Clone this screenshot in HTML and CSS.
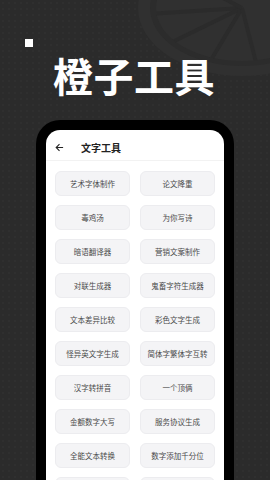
FILE: index.html
```html
<!DOCTYPE html>
<html lang="zh-CN">
  <head>
    <meta charset="UTF-8" />
    <meta name="viewport" content="width=device-width, initial-scale=1.0" />
    <title>橙子工具</title>
    <link rel="stylesheet" href="styles.css">
  </head>
  <body>
    <svg class="slice" viewBox="0 0 140 90" width="140" height="90">
      <defs>
        <clipPath id="pulp">
          <ellipse cx="112" cy="8" rx="86" ry="53" />
        </clipPath>
      </defs>
      <ellipse cx="112" cy="8" rx="104" ry="68" fill="#303030" />
      <ellipse cx="112" cy="8" rx="92" ry="58" fill="#2c2c2c" />
      <ellipse cx="112" cy="8" rx="86" ry="53" fill="#303030" />
      <g stroke="#2b2b2b" stroke-width="4" clip-path="url(#pulp)">
        <line x1="112" y1="8" x2="20" y2="14" />
        <line x1="112" y1="8" x2="30" y2="48" />
        <line x1="112" y1="8" x2="75" y2="70" />
        <line x1="112" y1="8" x2="128" y2="70" />
        <line x1="112" y1="8" x2="40" y2="-30" />
      </g>
    </svg>

    <div class="hero">
      <span class="dot"></span>
      <h1>橙子工具</h1>
    </div>

    <div class="phone">
      <div class="screen">
        <div class="topbar">
          <svg class="back" viewBox="0 0 10 10" width="9" height="9">
            <path d="M9 5H1.5M5 1.3L1.3 5 5 8.7" fill="none" stroke="#222" stroke-width="1.2" />
          </svg>
          <span class="topbar-title">文字工具</span>
        </div>
        <div class="tools">
          <div class="tool">艺术字体制作</div>
          <div class="tool">论文降重</div>
          <div class="tool">毒鸡汤</div>
          <div class="tool">为你写诗</div>
          <div class="tool">暗语翻译器</div>
          <div class="tool">营销文案制作</div>
          <div class="tool">对联生成器</div>
          <div class="tool">鬼畜字符生成器</div>
          <div class="tool">文本差异比较</div>
          <div class="tool">彩色文字生成</div>
          <div class="tool">怪异英文字生成</div>
          <div class="tool">简体字繁体字互转</div>
          <div class="tool">汉字转拼音</div>
          <div class="tool">一个顶俩</div>
          <div class="tool">金额数字大写</div>
          <div class="tool">服务协议生成</div>
          <div class="tool">全能文本转换</div>
          <div class="tool">数字添加千分位</div>
          <div class="tool"></div>
          <div class="tool"></div>
        </div>
      </div>
    </div>
  </body>
</html>
```

FILE: styles.css
```css
body {
  margin: 0;
  width: 270px;
  height: 480px;
  overflow: hidden;
  position: relative;
  background-color: #2b2b2b;
  background-image: radial-gradient(circle, #2f2f2f 1px, transparent 1.3px);
  background-size: 6px 6px;
  font-family: "Noto Sans CJK SC", "Noto Sans", sans-serif;
}
.slice {
  position: absolute;
  top: 0;
  right: 0;
}
.hero {
  position: relative;
  height: 120px;
}
.dot {
  position: absolute;
  left: 25px;
  top: 39px;
  width: 8px;
  height: 8px;
  background: #fff;
}
.hero h1 {
  margin: 0;
  padding-top: 50px;
  padding-left: 53px;
  font-size: 40px;
  line-height: 50px;
  font-weight: 700;
  color: #fff;
  letter-spacing: 0.5px;
}
.phone {
  margin-left: 36px;
  width: 178px;
  height: 350px;
  padding: 10px 10px 0;
  background: #000;
  border-radius: 24px 24px 0 0;
}
.screen {
  height: 100%;
  overflow: hidden;
  background: #fff;
  border-radius: 14px 14px 0 0;
}
.topbar {
  display: flex;
  align-items: center;
  height: 31px;
  padding: 4px 0 0 9px;
  box-sizing: border-box;
  border-bottom: 1px solid #f2f2f2;
}
.back {
  margin-right: 17px;
}
.topbar-title {
  font-size: 10px;
  font-weight: 700;
  color: #222;
}
.tools {
  display: grid;
  grid-template-columns: 1fr 1fr;
  grid-auto-rows: 25px;
  column-gap: 10px;
  row-gap: 9px;
  padding: 10px 9px 0;
}
.tool {
  display: flex;
  align-items: center;
  justify-content: center;
  background: #f4f4f6;
  border: 1px solid #ececef;
  border-radius: 6px;
  font-size: 7.5px;
  color: #4a4a4a;
}
```
